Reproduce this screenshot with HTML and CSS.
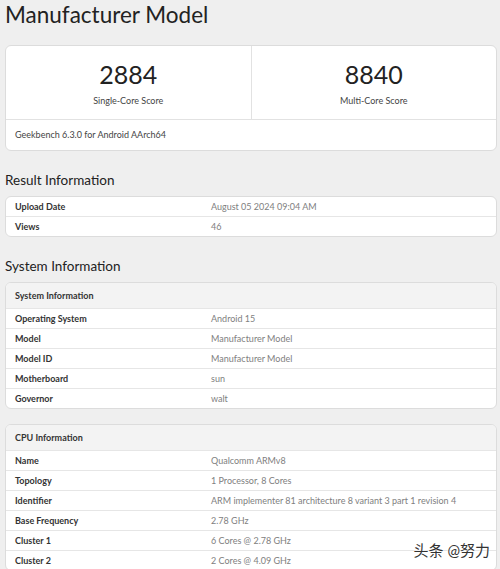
FILE: index.html
```html
<!DOCTYPE html>
<html lang="en">
<head>
  <meta charset="UTF-8" />
  <meta name="viewport" content="width=device-width, initial-scale=1.0" />
  <title>Manufacturer Model - Geekbench</title>
  <link rel="stylesheet" href="styles.css">
</head>
<body>
  <div class="page">
    <h1 class="title">Manufacturer Model</h1>

    <div class="card scores">
      <div class="score-row">
        <div class="score">
          <div class="score-value">2884</div>
          <div class="score-label">Single-Core Score</div>
        </div>
        <div class="score">
          <div class="score-value">8840</div>
          <div class="score-label">Multi-Core Score</div>
        </div>
      </div>
      <div class="score-foot">Geekbench 6.3.0 for Android AArch64</div>
    </div>

    <h2 class="heading">Result Information</h2>
    <div class="card">
      <div class="row"><div class="name">Upload Date</div><div class="value">August 05 2024 09:04 AM</div></div>
      <div class="row"><div class="name">Views</div><div class="value">46</div></div>
    </div>

    <h2 class="heading">System Information</h2>
    <div class="card">
      <div class="row head"><div class="name">System Information</div></div>
      <div class="row"><div class="name">Operating System</div><div class="value">Android 15</div></div>
      <div class="row"><div class="name">Model</div><div class="value">Manufacturer Model</div></div>
      <div class="row"><div class="name">Model ID</div><div class="value">Manufacturer Model</div></div>
      <div class="row"><div class="name">Motherboard</div><div class="value">sun</div></div>
      <div class="row"><div class="name">Governor</div><div class="value">walt</div></div>
    </div>

    <div class="card cpu">
      <div class="row head"><div class="name">CPU Information</div></div>
      <div class="row"><div class="name">Name</div><div class="value">Qualcomm ARMv8</div></div>
      <div class="row"><div class="name">Topology</div><div class="value">1 Processor, 8 Cores</div></div>
      <div class="row"><div class="name">Identifier</div><div class="value">ARM implementer 81 architecture 8 variant 3 part 1 revision 4</div></div>
      <div class="row"><div class="name">Base Frequency</div><div class="value">2.78 GHz</div></div>
      <div class="row"><div class="name">Cluster 1</div><div class="value">6 Cores @ 2.78 GHz</div></div>
      <div class="row"><div class="name">Cluster 2</div><div class="value">2 Cores @ 4.09 GHz</div></div>
    </div>
  </div>

  <div class="watermark">头条 @努力</div>
</body>
</html>
```

FILE: styles.css
```css
* {
  margin: 0;
  padding: 0;
  box-sizing: border-box;
}
body {
  font-family: 'Lato', 'Noto Sans CJK SC', sans-serif;
  background: #efefef;
  color: #2b2b2b;
  overflow: hidden;
}
.page {
  padding: 0 3px 0 5px;
}
.title {
  font-size: 22.5px;
  font-weight: 400;
  line-height: 30px;
  color: #222;
  margin-bottom: 15px;
}
.card {
  background: #fff;
  border: 1px solid #dcdcdc;
  border-radius: 6px;
  overflow: hidden;
}
.score-row {
  display: flex;
  height: 74px;
  border-bottom: 1px solid #e2e2e2;
}
.score {
  flex: 1;
  text-align: center;
  padding-top: 12px;
}
.score + .score {
  border-left: 1px solid #e2e2e2;
}
.score-value {
  font-size: 25px;
  line-height: 32px;
  color: #222;
}
.score-label {
  font-size: 9px;
  margin-top: 5px;
  color: #444;
}
.score-foot {
  font-size: 9px;
  color: #444;
  height: 30px;
  line-height: 30px;
  padding-left: 9px;
}
.heading {
  font-size: 13.5px;
  font-weight: 400;
  color: #222;
  margin: 22px 0 7px;
  line-height: 18px;
}
.card + .heading {
  margin-top: 20px;
}
.row {
  display: flex;
  height: 20px;
  line-height: 19px;
  font-size: 9px;
  border-top: 1px solid #e6e6e6;
}
.row:first-child {
  border-top: none;
  height: 19px;
  line-height: 19px;
}
.row.head {
  background: #f3f3f3;
  height: 25px;
  line-height: 25px;
}
.name {
  width: 40%;
  padding-left: 9px;
  color: #333;
  font-weight: 700;
}
.value {
  padding-left: 9px;
  color: #808080;
}
.cpu {
  margin-top: 15px;
}
.watermark {
  position: absolute;
  right: 10px;
  top: 539px;
  font-size: 15px;
  color: #333;
  text-shadow: 0 0 2px #fff, 0 0 2px #fff;
}
```
